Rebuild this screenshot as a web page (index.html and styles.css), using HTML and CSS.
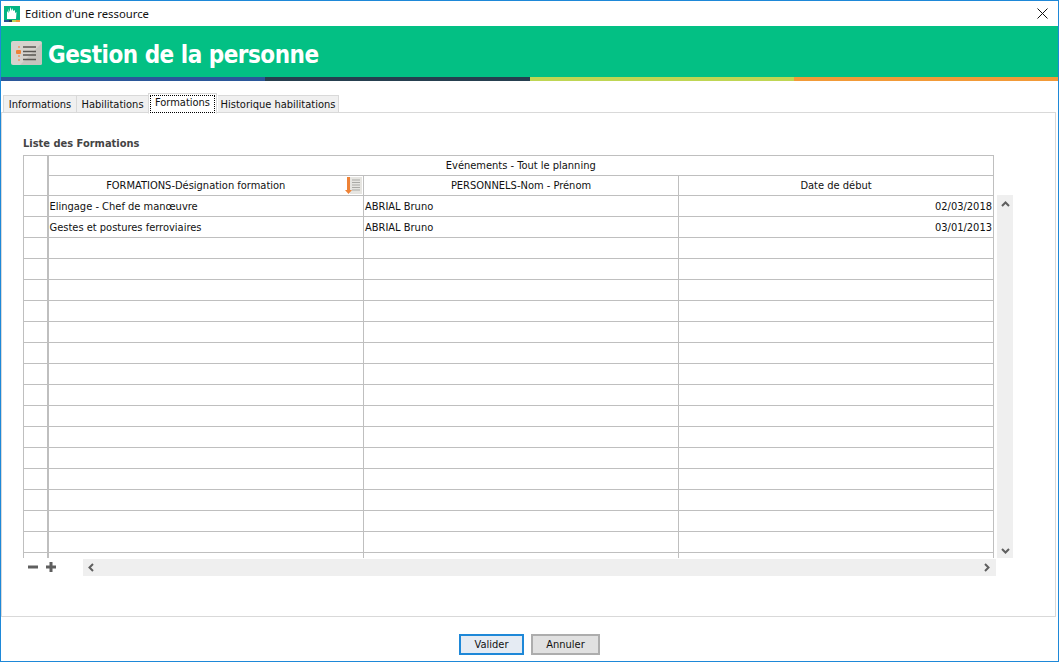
FILE: index.html
```html
<!DOCTYPE html>
<html lang="fr">
<head>
  <meta charset="UTF-8">
  <title>Edition d'une ressource</title>
  <link rel="stylesheet" href="styles.css">
</head>
<body>
  <div class="window">
    <div class="titlebar">
      <svg class="app-icon" width="16" height="16" viewBox="0 0 16 16">
        <rect width="16" height="16" fill="#03b583"/>
        <path d="M3 13V5l1.500 2V3l1.500 3V1l2 4V2l1.500 3 1.500-1v3l1.500-1-.5 7z" fill="#fff"/>
        <rect y="14" width="5" height="2" fill="#2b4f8f"/>
        <rect x="5" y="14" width="3" height="2" fill="#263f4f"/>
        <rect x="8" y="14" width="4" height="2" fill="#bfd653"/>
        <rect x="12" y="14" width="4" height="2" fill="#f29a38"/>
      </svg>
      <span class="titlebar-text">Edition d'une ressource</span>
      <svg class="close-icon" width="11" height="11" viewBox="0 0 11 11">
        <path d="M.5.5l10 10M10.500.5l-10 10" stroke="#111" stroke-width="1" fill="none"/>
      </svg>
    </div>

    <header class="banner">
      <svg class="banner-icon" width="31" height="24" viewBox="0 0 31 24">
        <rect width="31" height="24" rx="2" fill="#d6d3cd"/>
        <path d="M31 2L9 24h20a2 2 0 0 0 2-2z" fill="#c6c4be"/>
        <rect x="5" y="9" width="5" height="4" rx="1" fill="#ee8236"/>
        <rect x="7" y="5" width="2" height="2" fill="#e9a67c"/>
        <rect x="7" y="14" width="2" height="2" fill="#e9a67c"/>
        <rect x="7" y="18" width="2" height="2" fill="#e9a67c"/>
        <path d="M12 6h13M12 10.500h13M12 14h13M12 18.500h13" stroke="#5a5853" stroke-width="1.500" fill="none"/>
      </svg>
      <h1>Gestion de la personne</h1>
    </header>
    <div class="stripe">
      <span class="stripe-blue"></span>
      <span class="stripe-dark"></span>
      <span class="stripe-green"></span>
      <span class="stripe-orange"></span>
    </div>

    <nav class="tabs">
      <div class="tab tab-info">Informations</div>
      <div class="tab tab-hab">Habilitations</div>
      <div class="tab tab-active"><span class="focus">Formations</span></div>
      <div class="tab tab-hist">Historique habilitations</div>
    </nav>

    <section class="panel">
      <h2>Liste des Formations</h2>
      <div class="grid-row">
        <div class="grid-clip">
          <table class="grid">
            <colgroup>
              <col class="col-stub"><col class="col-first"><col class="col-data"><col class="col-data">
            </colgroup>
            <thead>
              <tr><th class="stub" rowspan="2"></th><th colspan="3">Evénements - Tout le planning</th></tr>
              <tr>
                <th class="sorted">FORMATIONS-Désignation formation
                  <svg class="sort-icon" width="17" height="17" viewBox="0 0 17 17">
                    <rect x="5" y="0" width="12" height="17" fill="#e6e5e1"/>
                    <path d="M7 3h8M7 5.500h8M7 8h8M7 10.500h8M7 13h8" stroke="#a9a9a5" stroke-width="1" fill="none"/>
                    <path d="M2 0h3v13h2l-3.500 4L0 13h2z" fill="#ee8236"/>
                  </svg>
                </th>
                <th>PERSONNELS-Nom - Prénom</th>
                <th>Date de début</th>
              </tr>
            </thead>
            <tbody>
              <tr><td class="stub"></td><td>Elingage - Chef de manœuvre</td><td>ABRIAL Bruno</td><td class="date">02/03/2018</td></tr>
              <tr><td class="stub"></td><td>Gestes et postures ferroviaires</td><td>ABRIAL Bruno</td><td class="date">03/01/2013</td></tr>
              <tr><td class="stub"></td><td></td><td></td><td></td></tr>
              <tr><td class="stub"></td><td></td><td></td><td></td></tr>
              <tr><td class="stub"></td><td></td><td></td><td></td></tr>
              <tr><td class="stub"></td><td></td><td></td><td></td></tr>
              <tr><td class="stub"></td><td></td><td></td><td></td></tr>
              <tr><td class="stub"></td><td></td><td></td><td></td></tr>
              <tr><td class="stub"></td><td></td><td></td><td></td></tr>
              <tr><td class="stub"></td><td></td><td></td><td></td></tr>
              <tr><td class="stub"></td><td></td><td></td><td></td></tr>
              <tr><td class="stub"></td><td></td><td></td><td></td></tr>
              <tr><td class="stub"></td><td></td><td></td><td></td></tr>
              <tr><td class="stub"></td><td></td><td></td><td></td></tr>
              <tr><td class="stub"></td><td></td><td></td><td></td></tr>
              <tr><td class="stub"></td><td></td><td></td><td></td></tr>
              <tr><td class="stub"></td><td></td><td></td><td></td></tr>
              <tr><td class="stub"></td><td></td><td></td><td></td></tr>
            </tbody>
          </table>
        </div>
        <div class="vscroll">
          <svg width="9" height="6" viewBox="0 0 9 6"><path d="M1 5l3.500-3.500L8 5" stroke="#5f5f5f" stroke-width="2" fill="none"/></svg>
          <svg width="9" height="6" viewBox="0 0 9 6"><path d="M1 1l3.500 3.500L8 1" stroke="#5f5f5f" stroke-width="2" fill="none"/></svg>
        </div>
      </div>
      <div class="grid-foot">
        <div class="grid-actions">
          <svg width="10" height="10" viewBox="0 0 10 10"><path d="M0 5h10" stroke="#5f5f5f" stroke-width="3"/></svg>
          <svg width="10" height="10" viewBox="0 0 10 10"><path d="M0 5h10M5 0v10" stroke="#5f5f5f" stroke-width="3"/></svg>
        </div>
        <div class="hscroll">
          <svg width="6" height="9" viewBox="0 0 6 9"><path d="M5 1L1.500 4.500 5 8" stroke="#5f5f5f" stroke-width="2" fill="none"/></svg>
          <svg width="6" height="9" viewBox="0 0 6 9"><path d="M1 1l3.500 3.500L1 8" stroke="#5f5f5f" stroke-width="2" fill="none"/></svg>
        </div>
      </div>
    </section>

    <footer class="actions">
      <button class="btn btn-primary">Valider</button>
      <button class="btn btn-cancel">Annuler</button>
    </footer>
  </div>
</body>
</html>
```

FILE: styles.css
```css
/* Base */
html, body {
  margin: 0;
  padding: 0;
  background: #fff;
}
body {
  font-family: "DejaVu Sans Condensed", "Noto Sans", sans-serif;
  font-size: 11px;
  color: #111;
}
.window {
  width: 1059px;
  height: 662px;
  box-sizing: border-box;
  border: 1px solid #1e88d8;
  display: flex;
  flex-direction: column;
  overflow: hidden;
}

/* Title bar */
.titlebar {
  height: 25px;
  display: flex;
  align-items: center;
  padding: 0 10px 0 3px;
}
.app-icon {
  margin-right: 5px;
}
.titlebar-text {
  font-family: "Noto Sans", sans-serif;
  font-size: 11.3px;
  flex: 1;
}

/* Banner */
.banner {
  height: 51px;
  background: #03c084;
  display: flex;
  align-items: center;
  padding-left: 10px;
}
.banner-icon {
  margin: 3px 6px 0 0;
}
.banner h1 {
  margin: 6px 0 0;
  color: #fff;
  font-size: 24px;
  font-weight: 700;
  letter-spacing: -0.5px;
}
.stripe {
  height: 4px;
  display: flex;
}
.stripe span {
  flex: 1;
}
.stripe-blue { background: #2b579a; }
.stripe-dark { background: #263f4f; }
.stripe-green { background: #bfd653; }
.stripe-orange { background: #f29a38; }

/* Tabs */
.tabs {
  display: flex;
  align-items: flex-end;
  height: 32px;
  padding-left: 2px;
  position: relative;
  z-index: 1;
  margin-bottom: -1px;
}
.tab {
  box-sizing: border-box;
  height: 18px;
  line-height: 18px;
  text-align: center;
  background: #f0f0f0;
  border: 1px solid #d9d9d9;
  border-left-width: 0;
  border-bottom-color: #d9d9d9;
}
.tab-info {
  width: 74px;
  border-left-width: 1px;
}
.tab-hab { width: 72px; }
.tab-active {
  width: 69px;
  height: 21px;
  margin-left: -1px;
  padding: 1px;
  background: #fff;
  border-width: 1px;
  border-bottom-color: #fff;
  margin-bottom: -1px;
}
.focus {
  display: block;
  height: 16px;
  line-height: 14px;
  border: 1px dotted #000;
}
.tab-hist {
  width: 121px;
  margin-left: 1px;
}

/* Panel */
.panel {
  box-sizing: border-box;
  height: 505px;
  margin-right: 2px;
  border: 1px solid #d9d9d9;
  padding: 23px 0 0 21px;
}
.panel h2 {
  margin: 0 0 4px;
  font-size: 11px;
  line-height: 15px;
  font-weight: 700;
  color: #444;
}

/* Grid */
.grid-row {
  display: flex;
  align-items: flex-start;
}
.grid-clip {
  width: 971px;
  height: 403px;
  overflow: hidden;
}
.grid {
  width: 971px;
  table-layout: fixed;
  border-collapse: collapse;
}
.col-stub { width: 24px; }
.col-first { width: 316px; }
.col-data { width: 315px; }
.grid th, .grid td {
  border: 1px solid #bfbfbf;
  padding: 0 1px;
  font-weight: 400;
  white-space: nowrap;
  overflow: hidden;
}
.grid th {
  height: 19px;
  line-height: 17px;
  text-align: center;
  position: relative;
}
.grid .sorted {
  padding-right: 21px;
}
.grid td {
  height: 18px;
  line-height: 18px;
  padding-top: 2px;
}
.grid .stub {
  border-right: 2px solid #bfbfbf;
  padding: 0;
}
.sort-icon {
  position: absolute;
  right: 1px;
  top: 1px;
}
.date {
  text-align: right;
}
.vscroll {
  box-sizing: border-box;
  width: 16px;
  height: 363px;
  margin: 40px 0 0 3px;
  padding: 6px 0 4px;
  background: #efefef;
  display: flex;
  flex-direction: column;
  justify-content: space-between;
  align-items: center;
}
.grid-foot {
  display: flex;
  align-items: flex-start;
  margin-top: 1px;
}
.grid-actions {
  width: 60px;
  display: flex;
  gap: 8px;
  padding: 3px 0 0 5px;
  box-sizing: border-box;
}
.hscroll {
  box-sizing: border-box;
  width: 913px;
  height: 17px;
  padding: 0 6px 0 5px;
  background: #efefef;
  display: flex;
  justify-content: space-between;
  align-items: center;
}

/* Buttons */
.actions {
  flex: 1;
  display: flex;
  justify-content: center;
  align-items: flex-start;
  gap: 7px;
  padding-top: 17px;
}
.btn {
  box-sizing: border-box;
  height: 21px;
  padding: 0;
  font: inherit;
  color: #111;
  background: #e1e1e1;
  border: 1px solid #adadad;
}
.btn-primary {
  width: 65px;
  background: #e5ebf3;
  border: 2px solid #1e88d8;
}
.btn-cancel {
  width: 69px;
  border-width: 2px;
  border-color: #adadad;
}
```
